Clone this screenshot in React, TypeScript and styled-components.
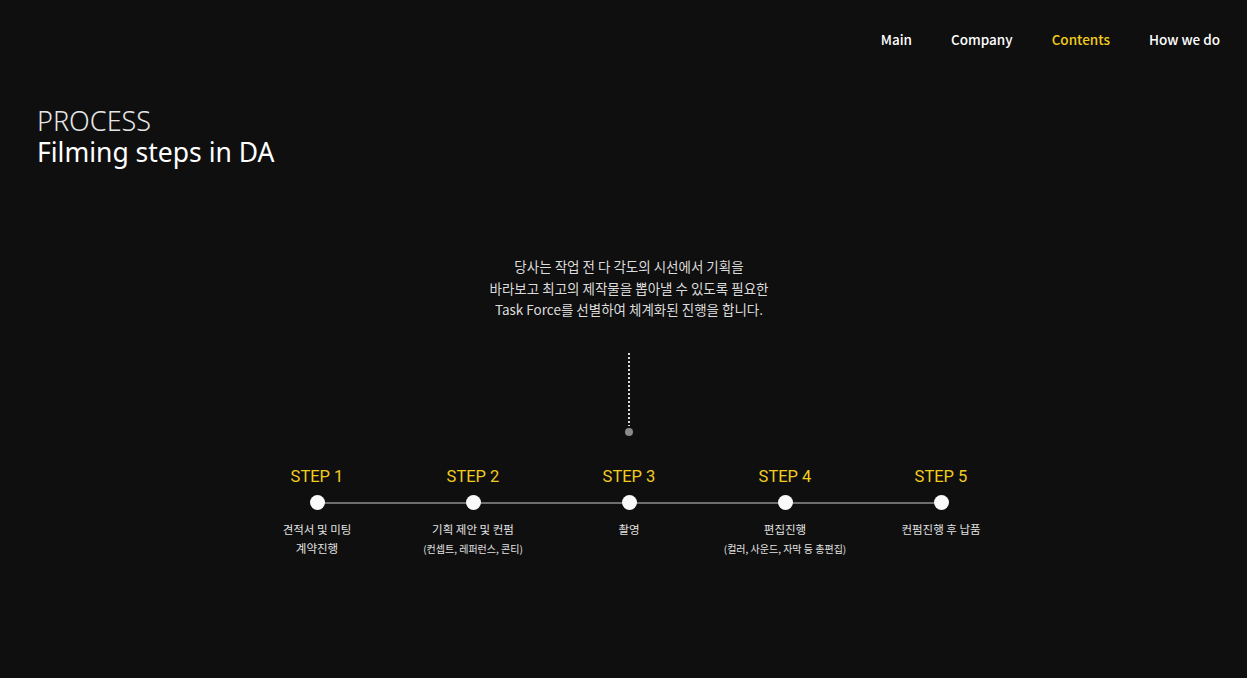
import styled, { createGlobalStyle } from 'styled-components';

const GlobalStyle = createGlobalStyle`
  html, body {
    margin: 0;
    padding: 0;
    background: #0f0f0f;
  }
  body {
    font-family: "Noto Sans", "Noto Sans CJK KR", sans-serif;
    color: #fff;
  }
`;

interface Step {
  label: string;
  title: string;
  note?: string;
}

const steps: Step[] = [
  { label: 'STEP 1', title: '견적서 및 미팅', note: '계약진행' },
  { label: 'STEP 2', title: '기획 제안 및 컨펌', note: '(컨셉트, 레퍼런스, 콘티)' },
  { label: 'STEP 3', title: '촬영' },
  { label: 'STEP 4', title: '편집진행', note: '(컬러, 사운드, 자막 등 총편집)' },
  { label: 'STEP 5', title: '컨펌진행 후 납품' },
];

const Page = styled.div`
  width: 1247px;
  height: 678px;
  overflow: hidden;
`;

const Header = styled.header`
  display: flex;
  justify-content: flex-end;
  gap: 39px;
  padding: 30px 27px 0 0;
  height: 33px;
`;

const NavItem = styled.a<{ $active?: boolean }>`
  font-family: "Noto Sans CJK KR", "Noto Sans", sans-serif;
  font-size: 13.5px;
  font-weight: 500;
  line-height: 18px;
  color: ${(p) => (p.$active ? '#f2cc1d' : '#fff')};
  text-decoration: none;
  cursor: pointer;
`;

const Heading = styled.div`
  display: flex;
  flex-direction: column;
  padding: 43px 0 0 37px;
`;

const Kicker = styled.div`
  font-family: "Noto Sans", sans-serif;
  font-size: 27px;
  font-weight: 300;
  line-height: 30px;
  color: #e6e6e6;
`;

const Title = styled.h1`
  margin: 0;
  font-family: "Noto Sans", sans-serif;
  font-size: 26.5px;
  font-weight: 400;
  line-height: 32px;
  color: #fff;
`;

const Section = styled.section`
  display: flex;
  flex-direction: column;
  align-items: center;
  padding: 88px 0 0 11px;
`;

const Intro = styled.p`
  margin: 0;
  text-align: center;
  font-family: "Noto Sans CJK KR", sans-serif;
  font-size: 13.5px;
  line-height: 21.5px;
  color: #dcdcdc;
`;

const Dots = styled.div`
  margin-top: 32px;
  width: 2px;
  height: 73px;
  background-image: linear-gradient(#d8d8d8 50%, transparent 50%);
  background-size: 2px 4px;
`;

const Pin = styled.div`
  margin-top: 2px;
  width: 8px;
  height: 8px;
  border-radius: 50%;
  background: #8a8a8a;
`;

const Track = styled.div`
  margin-top: 31px;
  display: grid;
  grid-template-columns: repeat(5, 156px);
  position: relative;
  &::before {
    content: '';
    position: absolute;
    left: 78px;
    right: 78px;
    top: 35px;
    height: 2px;
    background: #6e6e6e;
  }
`;

const StepCol = styled.div`
  display: flex;
  flex-direction: column;
  align-items: center;
  position: relative;
`;

const StepLabel = styled.div`
  font-family: Roboto, sans-serif;
  font-size: 16.5px;
  font-weight: 400;
  line-height: 20px;
  color: #f2cc1d;
`;

const Node = styled.div`
  margin-top: 8px;
  width: 15px;
  height: 15px;
  border-radius: 50%;
  background: #fafafa;
`;

const StepTitle = styled.div`
  margin-top: 10px;
  font-family: "Noto Sans CJK KR", sans-serif;
  font-size: 11.5px;
  line-height: 19px;
  color: #e2e2e2;
`;

const StepNote = styled.div<{ $small?: boolean }>`
  font-family: "Noto Sans CJK KR", sans-serif;
  font-size: ${(p) => (p.$small ? '10px' : '11.5px')};
  line-height: 19px;
  color: #e2e2e2;
`;

export default function App() {
  return (
    <Page>
      <GlobalStyle />
      <Header>
        <NavItem>Main</NavItem>
        <NavItem>Company</NavItem>
        <NavItem $active>Contents</NavItem>
        <NavItem>How we do</NavItem>
      </Header>
      <Heading>
        <Kicker>PROCESS</Kicker>
        <Title>Filming steps in DA</Title>
      </Heading>
      <Section>
        <Intro>
          당사는 작업 전 다 각도의 시선에서 기획을
          <br />
          바라보고 최고의 제작물을 뽑아낼 수 있도록 필요한
          <br />
          Task Force를 선별하여 체계화된 진행을 합니다.
        </Intro>
        <Dots />
        <Pin />
        <Track>
          {steps.map((s) => (
            <StepCol key={s.label}>
              <StepLabel>{s.label}</StepLabel>
              <Node />
              <StepTitle>{s.title}</StepTitle>
              {s.note && <StepNote $small={s.note.startsWith('(')}>{s.note}</StepNote>}
            </StepCol>
          ))}
        </Track>
      </Section>
    </Page>
  );
}
